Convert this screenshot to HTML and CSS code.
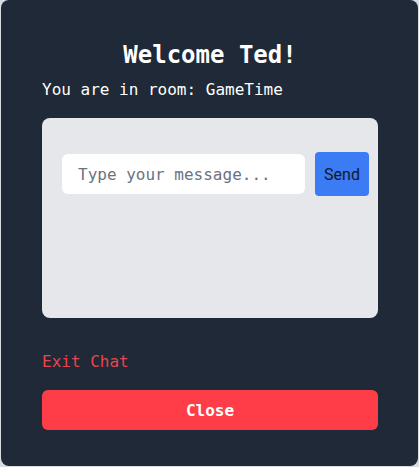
FILE: index.html
```html
<!DOCTYPE html>
<html>
<head>
<meta charset="utf-8">
<link rel="stylesheet" href="styles.css">
</head>
<body>
<div class="modal">
  <h2 class="title">Welcome Ted!</h2>
  <p class="room">You are in room: GameTime</p>
  <div class="chat">
    <div class="row">
      <input class="msg" type="text" placeholder="Type your message...">
      <button class="send">Send</button>
    </div>
  </div>
  <p class="exit">Exit Chat</p>
  <button class="close">Close</button>
</div>
</body>
</html>
```
FILE: styles.css
```css
html, body {
  margin: 0;
  padding: 0;
  background: #d9dce1;
  height: 467px;
  overflow: hidden;
}
.modal {
  box-sizing: border-box;
  margin-left: 1px;
  width: 417px;
  height: 466px;
  background: #1f2937;
  border-radius: 8px;
  padding: 39px 40px 36px 41px;
  display: flex;
  flex-direction: column;
  font-family: "DejaVu Sans Mono", "Liberation Mono", monospace;
  color: #ffffff;
}
.title {
  margin: 0;
  font-size: 24px;
  line-height: 32px;
  font-weight: bold;
  text-align: center;
}
.room {
  margin: 7px 0 0;
  font-size: 16px;
  line-height: 24px;
}
.chat {
  margin-top: 16px;
  height: 200px;
  background: #e5e7eb;
  border-radius: 8px;
  padding: 34px 0 0 20px;
  box-sizing: border-box;
}
.row {
  display: flex;
  align-items: center;
  gap: 10px;
}
.msg {
  box-sizing: border-box;
  width: 243px;
  height: 40px;
  border: none;
  border-radius: 6px;
  background: #ffffff;
  padding: 0 16px;
  font-family: "DejaVu Sans Mono", "Liberation Mono", monospace;
  font-size: 16px;
  color: #111827;
  outline: none;
}
.msg::placeholder {
  color: #6b7280;
}
.send {
  box-sizing: border-box;
  width: 54px;
  height: 44px;
  border: none;
  border-radius: 4px;
  background: #3b7bf4;
  color: #111827;
  font-family: Roboto, "Noto Sans", sans-serif;
  font-size: 16px;
  padding: 0;
}
.exit {
  margin: 32px 0 0;
  font-size: 16px;
  line-height: 24px;
  color: #e8454f;
}
.close {
  margin-top: 16px;
  height: 40px;
  border: none;
  border-radius: 6px;
  background: #ff3d48;
  color: #ffffff;
  font-family: "DejaVu Sans Mono", "Liberation Mono", monospace;
  font-size: 16px;
  font-weight: bold;
}
```
